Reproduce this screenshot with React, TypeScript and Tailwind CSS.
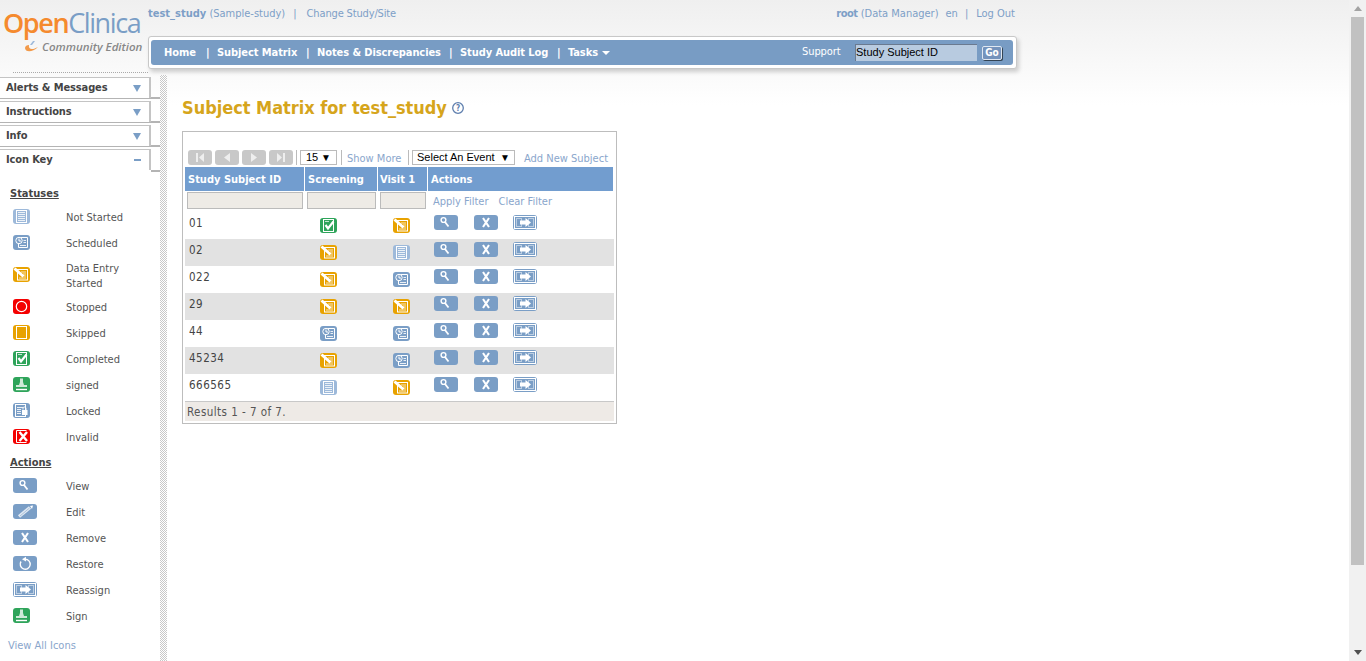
import React from "react";

const F = "font-['DejaVu_Sans_Condensed','DejaVu_Sans',Tahoma,sans-serif]";

const Base = ({ w = 17, bg, children }: { w?: number; bg: string; children?: React.ReactNode }) => (
  <svg width={w} height={15} viewBox={`0 0 ${w} 15`} className="block shrink-0">
    <rect x="0" y="0" width={w} height="15" rx="3" fill={bg} />
    {children}
  </svg>
);

const NotStarted = () => (
  <Base bg="#9db9da">
    <rect x="3.5" y="1.5" width="10" height="12" fill="none" stroke="#fff" />
    <path d="M5 3.5H12M5 5.5H12M5 7.5H12M5 9.5H12M5 11.5H12" stroke="#fff" opacity=".8" />
  </Base>
);
const Scheduled = () => (
  <Base bg="#7a9ec6">
    <path d="M5.5 2.5H14.5V12.5H5.5V9" fill="none" stroke="#fff" />
    <circle cx="6" cy="5.5" r="3.2" fill="#7a9ec6" stroke="#fff" />
    <path d="M6 3.5V6H8" fill="none" stroke="#fff" />
    <path d="M10.5 5.5H13M10.5 7.5H13M7 10.5H13" stroke="#fff" opacity=".85" />
  </Base>
);
const DataEntry = () => (
  <Base bg="#e8a200">
    <rect x="4.5" y="2.5" width="10" height="10.5" fill="none" stroke="#fff" />
    <path d="M8 5H13M10 7H13M11 9H13M6 11H13" stroke="#fff" opacity=".75" />
    <path d="M1.5 1.5L10.5 9.5" stroke="#fff" strokeWidth="3" />
  </Base>
);
const Stopped = () => (
  <Base bg="#f40000">
    <circle cx="8.5" cy="7.5" r="5.2" fill="none" stroke="#fff" strokeWidth="1.2" />
  </Base>
);
const Skipped = () => (
  <Base bg="#e8a200">
    <rect x="3.5" y="1.5" width="10" height="12" fill="none" stroke="#fff" />
  </Base>
);
const Completed = () => (
  <Base bg="#2ea45a">
    <rect x="3.5" y="1.5" width="10" height="12" fill="none" stroke="#fff" />
    <path d="M5.5 7L8 10.5L13.5 3.5" fill="none" stroke="#fff" strokeWidth="2.2" />
    <path d="M5 3.5H9" stroke="#fff" opacity=".7" />
  </Base>
);
const Signed = () => (
  <Base bg="#2ea45a">
    <path d="M7 1.5H10V5L11 8H14V10H3V8H6L7 5Z" fill="#cfe9d8" />
    <path d="M3 12.5H14" stroke="#fff" strokeWidth="1.4" />
  </Base>
);
const Locked = () => (
  <Base bg="#7a9ec6">
    <rect x="2.5" y="1.5" width="10" height="12" fill="none" stroke="#fff" />
    <path d="M4 4.5H10M4 6.5H8M4 8.5H8M4 10.5H8" stroke="#fff" opacity=".85" />
    <path d="M10 6.5V5.5A1.5 1.5 0 0 1 13 5.5V7" fill="none" stroke="#fff" />
    <rect x="9" y="7" width="5.5" height="5" fill="#fff" />
  </Base>
);
const Invalid = () => (
  <Base bg="#f40000">
    <path d="M13.5 1.5H3.5V13.5H13.5" fill="none" stroke="#fff" />
    <path d="M6.5 3L14 12M14 3L6.5 12" stroke="#fff" strokeWidth="2.4" />
  </Base>
);

const View = () => (
  <Base w={24} bg="#7a9ec6">
    <circle cx="9.5" cy="5" r="2.4" fill="#7a9ec6" stroke="#fff" strokeWidth="1.4" />
    <path d="M11 7L14.5 11.5" stroke="#fff" strokeWidth="1.8" />
  </Base>
);
const Edit = () => (
  <Base w={24} bg="#7a9ec6">
    <path d="M6 12.5L17 3.5" stroke="#dfe8f2" strokeWidth="3.4" />
    <path d="M7 12L16.5 4" stroke="#a9c0da" strokeWidth="1" />
    <path d="M17 2L20 1.5L19 5Z" fill="#fff" />
  </Base>
);
const Remove = () => (
  <Base w={24} bg="#7a9ec6">
    <path d="M9 3L15 12M15 3L9 12" stroke="#fff" strokeWidth="2.1" />
  </Base>
);
const Restore = () => (
  <Base w={24} bg="#7a9ec6">
    <path d="M8 5.5A5 5 0 1 0 12 3.2" fill="none" stroke="#fff" strokeWidth="1.4" />
    <path d="M13 .8L9 3.2L13 5.6Z" fill="#fff" />
  </Base>
);
const Reassign = () => (
  <Base w={24} bg="#7a9ec6">
    <rect x="1.5" y="1.5" width="21" height="12" fill="none" stroke="#fff" />
    <rect x="3.5" y="3.5" width="5" height="8" fill="none" stroke="#fff" strokeDasharray="1 1" />
    <rect x="15.5" y="3.5" width="5" height="8" fill="none" stroke="#fff" strokeDasharray="1 1" />
    <path d="M7 5.5H12.5V3L18 7.5L12.5 12V9.5H7Z" fill="#fff" />
  </Base>
);

const statuses: [React.ReactNode, React.ReactNode, string, string][] = [
  [<NotStarted />, "Not Started", "h-[26px]", "pt-[2px]"],
  [<Scheduled />, "Scheduled", "h-[26px]", "pt-[2px]"],
  [<DataEntry />, <>Data Entry<br />Started</>, "h-[38px]", "pt-[4px]"],
  [<Stopped />, "Stopped", "h-[26px]", "pt-[2px]"],
  [<Skipped />, "Skipped", "h-[26px]", "pt-[2px]"],
  [<Completed />, "Completed", "h-[26px]", "pt-[2px]"],
  [<Signed />, "signed", "h-[26px]", "pt-[2px]"],
  [<Locked />, "Locked", "h-[26px]", "pt-[2px]"],
  [<Invalid />, "Invalid", "h-[26px]", "pt-[2px]"],
];
const actions: [React.ReactNode, string][] = [
  [<View />, "View"],
  [<Edit />, "Edit"],
  [<Remove />, "Remove"],
  [<Restore />, "Restore"],
  [<Reassign />, "Reassign"],
  [<Signed />, "Sign"],
];

const rows: [string, React.ReactNode, React.ReactNode][] = [
  ["01", <Completed />, <DataEntry />],
  ["02", <DataEntry />, <NotStarted />],
  ["022", <DataEntry />, <Scheduled />],
  ["29", <DataEntry />, <DataEntry />],
  ["44", <Scheduled />, <Scheduled />],
  ["45234", <DataEntry />, <Scheduled />],
  ["666565", <NotStarted />, <DataEntry />],
];

const Tab = ({ label, open }: { label: string; open?: boolean }) => (
  <div className={`w-[160px] h-[22px] mb-[2px] ${open ? "" : "border-b-2 border-[#b4b4b4]"} relative`}>
    <div className="w-[151px] h-[21px] bg-white border-t border-r-2 border-[#c4c4c4] flex items-center justify-between pl-[6px] pr-[8px]">
      <span className="text-[11px] font-bold tracking-[-0.12px] text-[#444]">{label}</span>
      {open ? (
        <span className="w-[7px] h-[2px] bg-[#7a9ec6]" />
      ) : (
        <svg width="8" height="7" viewBox="0 0 8 7"><path d="M0 0H8L4 7Z" fill="#7a9ec6" /></svg>
      )}
    </div>
    {open && <div className="absolute left-[151px] right-0 bottom-[-1px] h-[2px] bg-[#b4b4b4]" />}
  </div>
);

const Pager = ({ d }: { d: string }) => (
  <span className="w-[24px] h-[15px] rounded-[3px] bg-[#c8c8c8] flex items-center justify-center">
    <svg width="10" height="9" viewBox="0 0 10 9"><path d={d} fill="#eee" /></svg>
  </span>
);
const Sep = () => <span className="block shrink-0 w-px h-[15px] bg-[#bbb]" />;

export default function App() {
  return (
    <div className={`flex w-full h-[661px] overflow-hidden bg-white text-[11px] ${F}`}>
      <div className="flex-1 min-w-0 flex flex-col bg-[linear-gradient(#efefef,#ffffff_105px)]">
        <header className="h-[72px] flex shrink-0">
          <div className="w-[148px] pl-[3px] pt-[7px] shrink-0">
            <div className="font-['Open_Sans',sans-serif] text-[27px] leading-[32px] tracking-[-1.4px] whitespace-nowrap">
              <span className="text-[#f58a2e] font-semibold">Open</span>
              <span className="text-[#7a9ec6]">Clinica</span>
            </div>
            <div className="flex items-center gap-[3px] pl-[21px] -mt-[1px]">
              <svg width="15" height="13" viewBox="0 0 15 13">
                <path d="M1 8C1 12 8 13 14 7C9 10 4 10 5 5C3 5 1 6 1 8Z" fill="#f29a4a" />
                <path d="M6 5L9 1H11L8 5Z" fill="#9db9da" />
              </svg>
              <span className="font-['Open_Sans',sans-serif] italic text-[11.5px] font-semibold text-[#888] whitespace-nowrap">Community Edition</span>
            </div>
          </div>
          <div className="w-[870px] shrink-0 flex flex-col">
            <div className="h-[36px] pt-[7px] pr-[3px] flex justify-between text-[#7d9fc7] leading-[14px] whitespace-pre">
              <div className="flex">
                <span><b>test_study</b> (Sample-study)</span>
                <span className="ml-[8px]">|</span>
                <span className="ml-[10px] tracking-[-0.15px]">Change Study/Site</span>
              </div>
              <div className="flex">
                <span><b className="tracking-[-0.5px]">root</b> (Data Manager)</span>
                <span className="ml-[7px]">en</span>
                <span className="ml-[7px]">|</span>
                <span className="ml-[8px]">Log Out</span>
              </div>
            </div>
            <div className="h-[33px] w-[869px] bg-white border border-[#c8c8c8] rounded-[3px] shadow-[2px_3px_4px_rgba(0,0,0,0.18)] pl-[2px] pt-[3px]">
              <nav className="w-[862px] h-[25px] rounded-[3px] bg-[#789cc4] flex items-center text-white font-bold text-[11px] tracking-[-0.08px] pl-[13px] whitespace-nowrap">
                <span className="w-[42px] pt-[1px]">Home</span>
                <span className="w-[11px] pt-[1px]">|</span>
                <span className="w-[89px] pt-[1px]">Subject Matrix</span>
                <span className="w-[11px] pt-[1px]">|</span>
                <span className="w-[132px] pt-[1px]">Notes &amp; Discrepancies</span>
                <span className="w-[11px] pt-[1px]">|</span>
                <span className="w-[97px] pt-[1px]">Study Audit Log</span>
                <span className="w-[11px] pt-[1px]">|</span>
                <span className="flex items-center gap-[4px] w-[234px] pt-[1px]">
                  Tasks
                  <svg width="8" height="4" viewBox="0 0 8 4"><path d="M0 0H8L4 4Z" fill="#fff" /></svg>
                </span>
                <span className="w-[53px] font-normal text-[11px]">Support</span>
                <span className="w-[122px] h-[17px] bg-[#b8cbe0] border-l border-t border-[#6a7a90] font-['Liberation_Sans',sans-serif] font-normal tracking-normal text-[11px] leading-[15px] text-black">Study Subject ID</span>
                <span className="ml-[5px] w-[20px] h-[14px] rounded-[2px] bg-[#7493bc] border border-[#dfe7f1] shadow-[1px_1px_0_#345] text-[10px] leading-[12px] text-center">Go</span>
              </nav>
            </div>
          </div>
        </header>

        <div className="flex-1 min-h-0 flex">
          <aside className="w-[160px] shrink-0 text-[#555]">
            <div className="ml-[13px] w-[135px] border-t border-dotted border-[#aaa] mb-[4px]" />
            <Tab label="Alerts & Messages" />
            <Tab label="Instructions" />
            <Tab label="Info" />
            <Tab label="Icon Key" open />
            <div className="pl-[10px] pt-[14px] bg-white">
              <div className="font-bold text-[11px] underline text-[#444] leading-[14px] mb-[2px]">Statuses</div>
              {statuses.map(([icon, label, h, pt], i) => (
                <div key={i} className={`flex items-center pl-[3px] leading-[15px] ${h}`}>
                  <span className="w-[53px]">{icon}</span>
                  <span className={pt}>{label}</span>
                </div>
              ))}
              <div className="font-bold text-[11px] underline text-[#444] leading-[14px] mt-[7px] mb-[3px]">Actions</div>
              {actions.map(([icon, label], i) => (
                <div key={i} className="flex items-center pl-[3px] h-[26px]">
                  <span className="w-[53px] -mt-[2px]">{icon}</span>
                  <span className="pt-[2px]">{label}</span>
                </div>
              ))}
              <div className="-ml-[2px] mt-[9px] text-[#8aa6cc]">View All Icons</div>
            </div>
          </aside>
          <div className="w-[7px] mt-[3px] shrink-0 bg-[repeating-conic-gradient(#c8c8c8_0_25%,#ffffff_0_50%)] bg-[length:2px_2px]" />

          <main className="flex-1 pl-[15px] pt-[25px]">
            <h1 className="flex items-center gap-[5px] text-[18px] leading-[22px] font-bold tracking-[-0.03px] text-[#d6a51c]">
              Subject Matrix for test_study
              <svg width="12" height="12" viewBox="0 0 12 12">
                <circle cx="6" cy="6" r="5.3" fill="#fff" stroke="#5f7fae" strokeWidth="1.3" />
                <text x="6" y="9" textAnchor="middle" fontSize="8" fontWeight="bold" fill="#5f7fae">?</text>
              </svg>
            </h1>
            <div className="mt-[12px] w-[435px] h-[293px] bg-white border border-[#bdbdbd] pl-[2px] pt-[18px]">
              <div className="h-[15px] flex items-center pl-[3px] text-[#8aa6cc] whitespace-nowrap">
                <div className="flex gap-[3px]">
                  <Pager d="M1 0H3V9H1ZM9 0V9L4 4.5Z" />
                  <Pager d="M8 0V9L2 4.5Z" />
                  <Pager d="M2 0V9L8 4.5Z" />
                  <Pager d="M1 0V9L6 4.5ZM7 0H9V9H7Z" />
                </div>
                <span className="ml-[3px] mr-[3px]"><Sep /></span>
                <span className="w-[37px] h-[15px] bg-white border border-[#bbb] flex items-center justify-between px-[5px] font-['Liberation_Sans',sans-serif] text-black">15<span className="text-[10px]">▼</span></span>
                <span className="ml-[4px]"><Sep /></span>
                <span className="ml-[5px] w-[55px] pt-[4px]">Show More</span>
                <span className="ml-[6px] mr-[3px]"><Sep /></span>
                <span className="w-[103px] h-[15px] bg-white border border-[#bbb] flex items-center justify-between px-[4px] font-['Liberation_Sans',sans-serif] text-black">Select An Event<span className="text-[10px]">▼</span></span>
                <span className="ml-[9px] pt-[4px]">Add New Subject</span>
              </div>
              <div className="mt-[2px] w-[428px] h-[24px] bg-[#729dcf] flex text-white font-bold text-[11px] leading-[26px]">
                <div className="w-[120px] pl-[3px] border-r border-white">Study Subject ID</div>
                <div className="w-[73px] pl-[3px] border-r border-white">Screening</div>
                <div className="w-[50px] pl-[2px] border-r border-white">Visit 1</div>
                <div className="pl-[3px]">Actions</div>
              </div>
              <div className="h-[21px] flex items-start pt-[1px] text-[#8aa6cc]">
                <span className="ml-[2px] w-[116px] h-[17px] bg-[#eeebe6] border border-[#bbb]" />
                <span className="ml-[4px] w-[69px] h-[17px] bg-[#eeebe6] border border-[#bbb]" />
                <span className="ml-[4px] w-[46px] h-[17px] bg-[#eeebe6] border border-[#bbb]" />
                <span className="ml-[7px] leading-[20px]">Apply Filter</span>
                <span className="ml-[10px] leading-[20px]">Clear Filter</span>
              </div>
              {rows.map(([id, a, b], i) => (
                <div key={id} className={`w-[429px] h-[27px] flex ${i % 2 ? "bg-[#e2e2e2]" : "bg-white"}`}>
                  <div className="w-[135px] pl-[4px] pt-[3px] text-[#444] text-[11.5px] leading-[16px] tracking-[0.5px]">{id}</div>
                  <div className="w-[73px] pt-[6px]">{a}</div>
                  <div className="w-[41px] pt-[6px]">{b}</div>
                  <div className="flex pt-[3px]">
                    <span className="w-[40px]"><View /></span>
                    <span className="w-[39px]"><Remove /></span>
                    <Reassign />
                  </div>
                </div>
              ))}
              <div className="w-[429px] h-[20px] bg-[#eeeae6] border-t border-[#c8c8c8] pl-[2px] text-[#555] text-[11.5px] leading-[20px] tracking-[0.45px]">Results 1 - 7 of 7.</div>
            </div>
          </main>
        </div>
      </div>

      <div className="w-[17px] shrink-0 bg-[#f1f1f1] flex flex-col items-center">
        <div className="h-[17px] flex items-center justify-center">
          <svg width="8" height="5" viewBox="0 0 8 5"><path d="M4 0L8 5H0Z" fill="#a3a3a3" /></svg>
        </div>
        <div className="w-[13px] h-[548px] bg-[#c1c1c1]" />
        <div className="flex-1" />
        <div className="h-[17px] flex items-center justify-center">
          <svg width="8" height="5" viewBox="0 0 8 5"><path d="M0 0H8L4 5Z" fill="#505050" /></svg>
        </div>
      </div>
    </div>
  );
}
